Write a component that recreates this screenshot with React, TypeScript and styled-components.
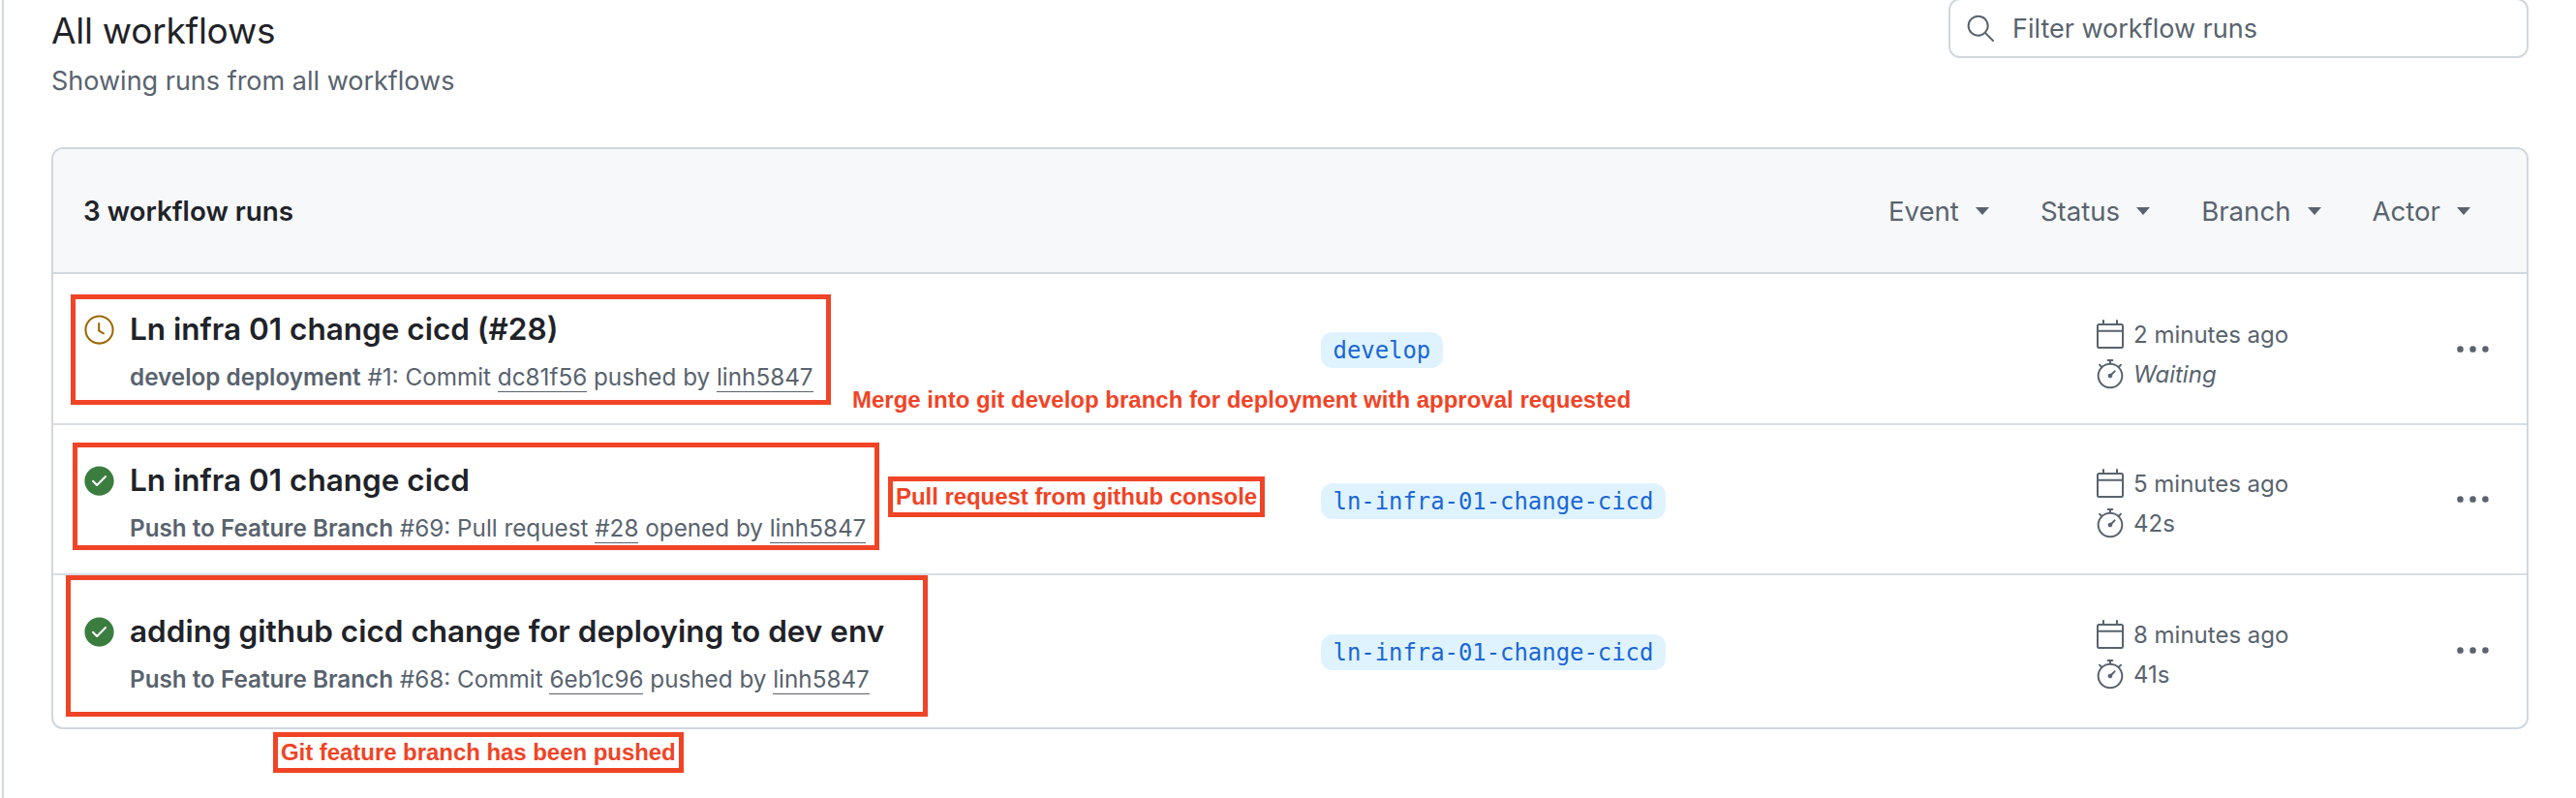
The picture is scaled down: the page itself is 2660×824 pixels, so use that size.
import React from "react";
import styled, { createGlobalStyle } from "styled-components";
import {
  GoCalendar,
  GoCheckCircleFill,
  GoClock,
  GoKebabHorizontal,
  GoSearch,
  GoStopwatch,
} from "react-icons/go";

const GlobalStyle = createGlobalStyle`
  html, body {
    margin: 0;
    background: #ffffff;
  }
  body {
    font-family: Inter, "Noto Sans", sans-serif;
    color: #1f2328;
  }
`;

const Page = styled.div`
  position: relative;
  width: 2660px;
  height: 824px;
  overflow: hidden;
  box-sizing: border-box;
  background: #ffffff;
  margin-left: 2px;
  border-left: 2px solid #d0d7de;
  padding-left: 49px;
`;

const TopBar = styled.div`
  display: flex;
  justify-content: space-between;
  align-items: flex-start;
  width: 2558px;
  height: 152px;
`;

const Heading = styled.div`
  padding-top: 9px;
`;

const Title = styled.h1`
  margin: 0;
  font-size: 37px;
  line-height: 46px;
  font-weight: 400;
  letter-spacing: -0.25px;
  color: #1f2328;
`;

const Subtitle = styled.p`
  margin: 11px 0 0;
  font-size: 27px;
  line-height: 36px;
  color: #59636e;
`;

const SearchBox = styled.div`
  display: flex;
  align-items: center;
  gap: 17px;
  box-sizing: border-box;
  width: 599px;
  height: 62px;
  margin-top: -2px;
  padding-left: 15px;
  border: 2px solid #d0d7de;
  border-radius: 12px;
  font-size: 27px;
  color: #59636e;
`;

const RunsPanel = styled.section`
  box-sizing: border-box;
  width: 2558px;
  border: 2px solid #d0d7de;
  border-radius: 12px;
  overflow: hidden;
`;

const PanelHeader = styled.header`
  display: flex;
  align-items: center;
  justify-content: space-between;
  box-sizing: border-box;
  height: 129px;
  padding: 0 58px 0 31px;
  background: #f6f8fa;
  border-bottom: 2px solid #d0d7de;
`;

const RunCount = styled.h2`
  margin: 0;
  font-size: 27.8px;
  font-weight: 600;
  color: #1f2328;
`;

const Filters = styled.div`
  display: flex;
  gap: 53px;
`;

const Filter = styled.div`
  display: flex;
  align-items: center;
  gap: 17px;
  font-size: 27.6px;
  color: #59636e;
`;

const Caret = styled.span`
  width: 0;
  height: 0;
  border-left: 7.5px solid transparent;
  border-right: 7.5px solid transparent;
  border-top: 8px solid #59636e;
`;

const Row = styled.div<{ $height: number; $divided?: boolean }>`
  display: grid;
  grid-template-columns: 48px 1230px 799px 371px 40px;
  box-sizing: border-box;
  height: ${({ $height }) => $height}px;
  padding-left: 31px;
  border-top: ${({ $divided }) => ($divided ? "2px solid #d8dee4" : "none")};
`;

const StatusIcon = styled.div<{ $shift: number; $color: string }>`
  display: flex;
  margin-top: ${({ $shift }) => 41 + $shift}px;
  color: ${({ $color }) => $color};
`;

const RunText = styled.div<{ $shift: number }>`
  margin-top: ${({ $shift }) => 37 + $shift}px;
`;

const RunTitle = styled.div`
  font-size: 31.5px;
  line-height: 40px;
  font-weight: 600;
  color: #1f2328;
`;

const RunMeta = styled.div`
  margin-top: 12px;
  font-size: 24.25px;
  line-height: 36px;
  color: #59636e;
`;

const Workflow = styled.b`
  font-weight: 600;
`;

const MetaLink = styled.span`
  border-bottom: 1px solid #59636e;
`;

const BranchCell = styled.div<{ $shift: number }>`
  margin-top: ${({ $shift }) => 60 + $shift}px;
`;

const BranchPill = styled.span`
  display: inline-block;
  box-sizing: border-box;
  height: 37px;
  padding: 0 12.5px;
  border-radius: 12px;
  background: #dff3ff;
  color: #1a66d6;
  font-family: "DejaVu Sans Mono", monospace;
  font-size: 23.9px;
  line-height: 38px;
`;

const TimeCell = styled.div<{ $shift: number }>`
  margin-top: ${({ $shift }) => 42 + $shift}px;
  font-size: 24px;
  color: #59636e;
`;

const TimeLine = styled.div<{ $italic?: boolean }>`
  display: flex;
  align-items: center;
  gap: 8px;
  height: 41px;
  font-style: ${({ $italic }) => ($italic ? "italic" : "normal")};
`;

const MoreButton = styled.div<{ $shift: number }>`
  display: flex;
  align-self: center;
  margin-top: ${({ $shift }) => $shift}px;
  color: #59636e;
`;

const Callout = styled.div<{ $x: number; $y: number; $w: number; $h: number }>`
  position: absolute;
  left: ${({ $x }) => $x - 4}px;
  top: ${({ $y }) => $y}px;
  width: ${({ $w }) => $w}px;
  height: ${({ $h }) => $h}px;
  box-sizing: border-box;
  border: 5px solid #f04426;
`;

const Note = styled.div<{ $x: number; $y: number; $boxed?: boolean }>`
  position: absolute;
  left: ${({ $x }) => $x - 4}px;
  top: ${({ $y }) => $y}px;
  box-sizing: border-box;
  height: ${({ $boxed }) => ($boxed ? "42px" : "auto")};
  padding: ${({ $boxed }) => ($boxed ? "0 3px" : "0")};
  border: ${({ $boxed }) => ($boxed ? "5px solid #f04426" : "none")};
  font-family: "Liberation Sans", Arial, sans-serif;
  font-size: 24px;
  line-height: 32px;
  font-weight: 700;
  letter-spacing: ${({ $boxed }) => ($boxed ? "-0.05px" : "0")};
  color: #f04426;
  white-space: nowrap;
`;

type Run = {
  title: string;
  workflow: string;
  number: string;
  before: string;
  link: string;
  after: string;
  branch: string;
  age: string;
  duration: string;
  waiting?: boolean;
  height: number;
  shift: number;
  timeShift: number;
  moreShift: number;
};

const runs: Run[] = [
  {
    title: "Ln infra 01 change cicd (#28)",
    workflow: "develop deployment",
    number: "#1",
    before: "Commit",
    link: "dc81f56",
    after: "pushed by",
    branch: "develop",
    age: "2 minutes ago",
    duration: "Waiting",
    waiting: true,
    height: 154,
    shift: 0,
    timeShift: 0,
    moreShift: 0,
  },
  {
    title: "Ln infra 01 change cicd",
    workflow: "Push to Feature Branch",
    number: "#69",
    before: "Pull request",
    link: "#28",
    after: "opened by",
    branch: "ln-infra-01-change-cicd",
    age: "5 minutes ago",
    duration: "42s",
    height: 155,
    shift: 0,
    timeShift: -2,
    moreShift: 0,
  },
  {
    title: "adding github cicd change for deploying to dev env",
    workflow: "Push to Feature Branch",
    number: "#68",
    before: "Commit",
    link: "6eb1c96",
    after: "pushed by",
    branch: "ln-infra-01-change-cicd",
    age: "8 minutes ago",
    duration: "41s",
    height: 159,
    shift: 1,
    timeShift: -1,
    moreShift: -3,
  },
];

const App: React.FC = () => {
  return (
    <>
      <GlobalStyle />
      <Page>
        <TopBar>
          <Heading>
            <Title>All workflows</Title>
            <Subtitle>Showing runs from all workflows</Subtitle>
          </Heading>
          <SearchBox>
            <GoSearch size={32} />
            Filter workflow runs
          </SearchBox>
        </TopBar>
        <RunsPanel>
          <PanelHeader>
            <RunCount>3 workflow runs</RunCount>
            <Filters>
              {["Event", "Status", "Branch", "Actor"].map((label) => (
                <Filter key={label}>
                  {label}
                  <Caret />
                </Filter>
              ))}
            </Filters>
          </PanelHeader>
          {runs.map((run, index) => (
            <Row key={run.number} $height={run.height} $divided={index > 0}>
              <StatusIcon $shift={run.shift} $color={run.waiting ? "#9a6700" : "#3b7d3f"}>
                {run.waiting ? <GoClock size={33} /> : <GoCheckCircleFill size={33} />}
              </StatusIcon>
              <RunText $shift={run.shift}>
                <RunTitle>{run.title}</RunTitle>
                <RunMeta>
                  <Workflow>{run.workflow}</Workflow> {run.number}: {run.before}{" "}
                  <MetaLink>{run.link}</MetaLink> {run.after} <MetaLink>linh5847</MetaLink>
                </RunMeta>
              </RunText>
              <BranchCell $shift={run.shift}>
                <BranchPill>{run.branch}</BranchPill>
              </BranchCell>
              <TimeCell $shift={run.timeShift}>
                <TimeLine>
                  <GoCalendar size={32} />
                  {run.age}
                </TimeLine>
                <TimeLine $italic={run.waiting}>
                  <GoStopwatch size={32} />
                  {run.duration}
                </TimeLine>
              </TimeCell>
              <MoreButton $shift={run.moreShift}>
                <GoKebabHorizontal size={39} />
              </MoreButton>
            </Row>
          ))}
        </RunsPanel>
        <Callout $x={73} $y={304} $w={785} $h={114} />
        <Callout $x={75} $y={457} $w={833} $h={111} />
        <Callout $x={68} $y={594} $w={890} $h={146} />
        <Note $x={880} $y={397}>
          Merge into git develop branch for deployment with approval requested
        </Note>
        <Note $x={917} $y={492} $boxed>
          Pull request from github console
        </Note>
        <Note $x={282} $y={756} $boxed>
          Git feature branch has been pushed
        </Note>
      </Page>
    </>
  );
};

export default App;
